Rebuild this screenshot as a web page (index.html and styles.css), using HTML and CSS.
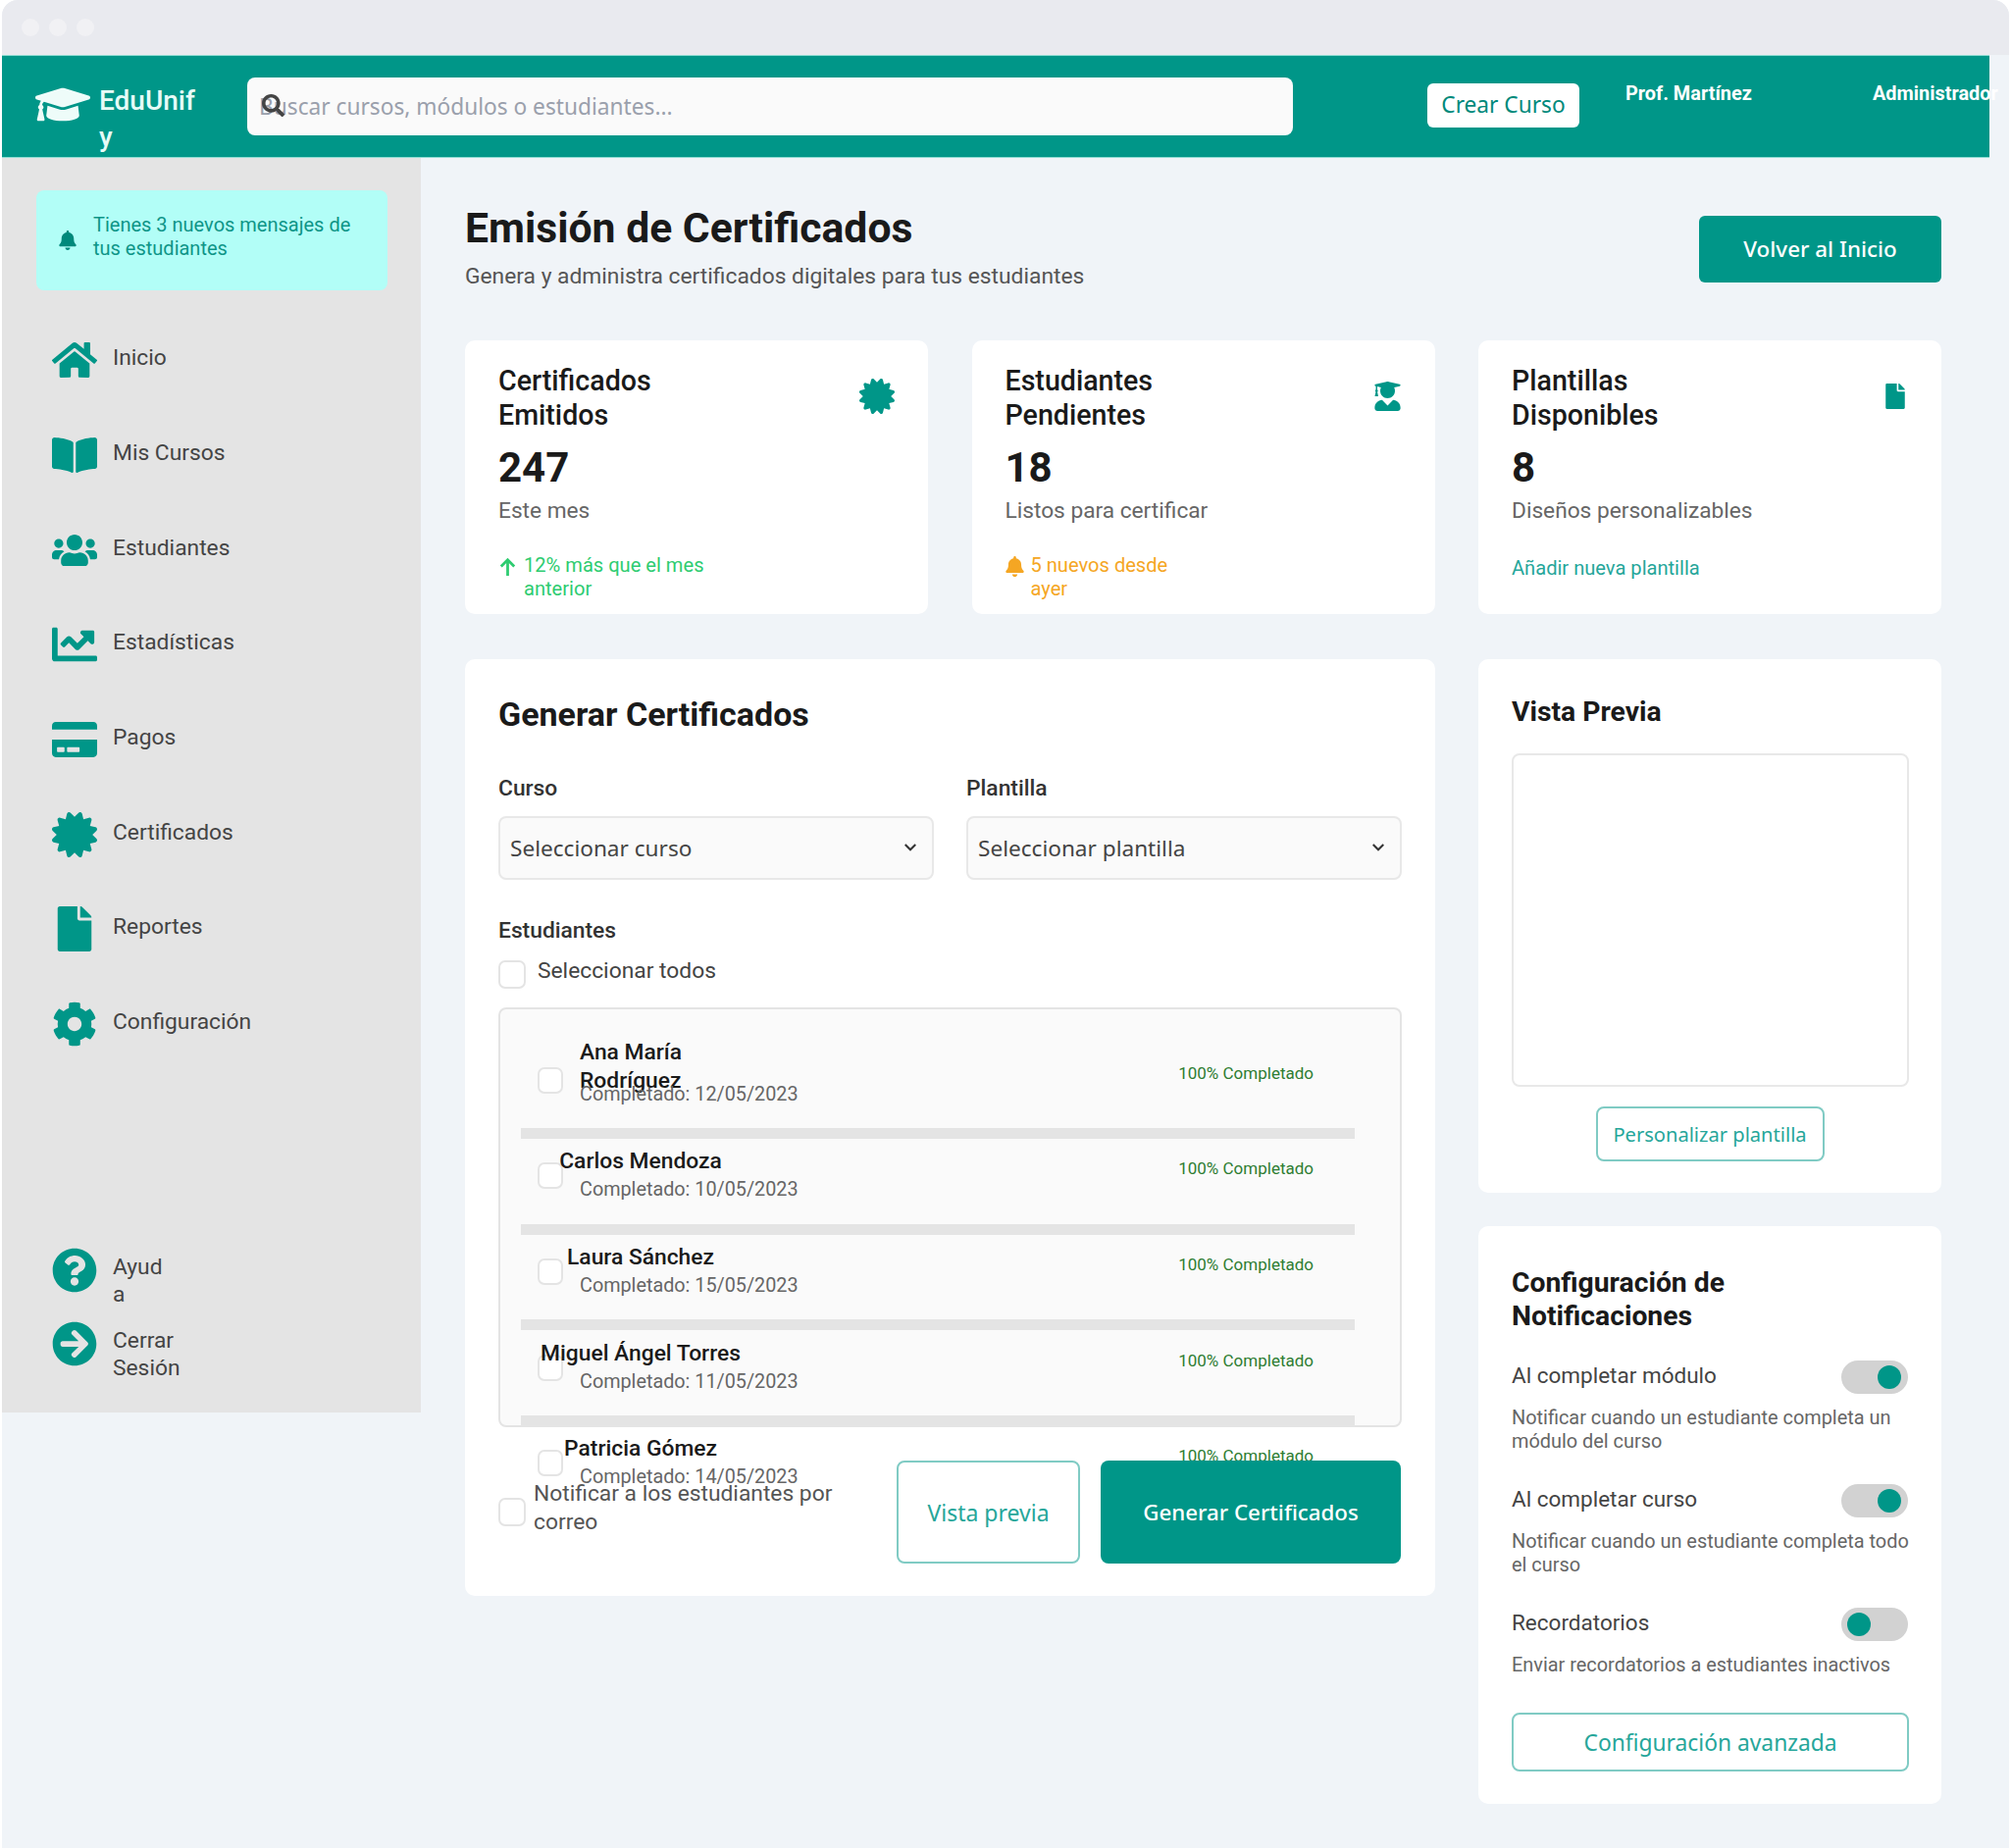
FILE: index.html
```html
<!DOCTYPE html>
<html lang="en">
<head>
<meta charset="UTF-8">
<meta name="viewport" content="width=device-width, initial-scale=1.0">
<title>EduUnify - Emisión de Certificados</title>
<link rel="stylesheet" href="styles.css">
</head>
<body>

<svg class="sprite" xmlns="http://www.w3.org/2000/svg">
  <symbol id="i-cap" viewBox="0 0 640 512"><path d="M622.34 153.2L343.4 67.5c-15.2-4.67-31.6-4.67-46.79 0L17.66 153.2c-23.54 7.23-23.54 38.36 0 45.59l48.63 14.94c-10.67 13.19-17.23 29.28-17.88 46.9C38.78 266.15 32 276.11 32 288c0 10.78 5.68 19.85 13.86 25.65L20.33 428.53C18.11 438.52 25.71 448 35.94 448h56.11c10.24 0 17.84-9.48 15.62-19.47L82.14 313.65C90.32 307.85 96 298.78 96 288c0-11.57-6.47-21.25-15.66-26.87.76-15.02 8.44-28.3 20.69-36.72L296.6 284.5c9.06 2.78 26.44 6.25 46.79 0l278.95-85.7c23.55-7.24 23.55-38.36 0-45.6zM352.79 315.09c-28.53 8.76-52.84 3.92-65.59 0l-145.02-44.55L128 384c0 35.35 85.96 64 192 64s192-28.65 192-64l-14.18-113.47-145.03 44.56z"/></symbol>
  <symbol id="i-search" viewBox="0 0 512 512"><path d="M505 442.7L405.3 343c-4.5-4.5-10.6-7-17-7H372c27.6-35.3 44-79.7 44-128C416 93.1 322.9 0 208 0S0 93.1 0 208s93.1 208 208 208c48.3 0 92.7-16.4 128-44v16.3c0 6.4 2.5 12.5 7 17l99.7 99.7c9.4 9.4 24.6 9.4 33.9 0l28.3-28.3c9.4-9.4 9.4-24.6.1-34zM208 336c-70.7 0-128-57.2-128-128 0-70.7 57.2-128 128-128 70.7 0 128 57.2 128 128 0 70.7-57.2 128-128 128z"/></symbol>
  <symbol id="i-bell" viewBox="0 0 448 512"><path d="M224 512c35.32 0 63.97-28.65 63.97-64H160.03c0 35.35 28.65 64 63.97 64zm215.39-149.71c-19.32-20.76-55.47-51.99-55.47-154.29 0-77.7-54.48-139.9-127.94-155.16V32c0-17.67-14.32-32-31.98-32s-31.98 14.33-31.98 32v20.84C118.56 68.1 64.08 130.3 64.08 208c0 102.3-36.15 133.53-55.47 154.29-6 6.45-8.66 14.16-8.61 21.71.11 16.4 12.98 32 32.1 32h383.8c19.12 0 32-15.6 32.1-32 .05-7.55-2.61-15.27-8.61-21.71z"/></symbol>
  <symbol id="i-home" viewBox="0 0 576 512"><path d="M280.37 148.26L96 300.11V464a16 16 0 0 0 16 16l112.06-.29a16 16 0 0 0 15.92-16V368a16 16 0 0 1 16-16h64a16 16 0 0 1 16 16v95.64a16 16 0 0 0 16 16.05L464 480a16 16 0 0 0 16-16V300L295.67 148.26a12.19 12.19 0 0 0-15.3 0zM571.6 251.47L488 182.56V44.05a12 12 0 0 0-12-12h-56a12 12 0 0 0-12 12v72.61L318.47 43a48 48 0 0 0-61 0L4.34 251.47a12 12 0 0 0-1.6 16.9l25.5 31A12 12 0 0 0 45.15 301l235.22-193.74a12.19 12.19 0 0 1 15.3 0L530.9 301a12 12 0 0 0 16.9-1.6l25.5-31a12 12 0 0 0-1.7-16.93z"/></symbol>
  <symbol id="i-book" viewBox="0 0 576 512"><path d="M542.22 32.05c-54.8 3.11-163.72 14.43-230.96 55.59-4.64 2.84-7.27 7.89-7.27 13.17v363.87c0 11.55 12.63 18.85 23.28 13.49 69.18-34.82 169.23-44.32 218.7-46.92 16.89-.89 30.02-14.43 30.02-30.66V62.75c.01-17.71-15.35-31.74-33.77-30.7zM264.73 87.64C197.5 46.48 88.58 35.17 33.78 32.05 15.36 31.01 0 45.04 0 62.75V400.6c0 16.24 13.13 29.78 30.02 30.66 49.49 2.6 149.59 12.11 218.77 46.95 10.62 5.35 23.21-1.94 23.21-13.46V100.63c0-5.29-2.62-10.14-7.27-12.99z"/></symbol>
  <symbol id="i-users" viewBox="0 0 640 512"><path d="M96 224c35.3 0 64-28.7 64-64s-28.7-64-64-64-64 28.7-64 64 28.7 64 64 64zm448 0c35.3 0 64-28.7 64-64s-28.7-64-64-64-64 28.7-64 64 28.7 64 64 64zm32 32h-64c-17.6 0-33.5 7.1-45.1 18.6 40.3 22.1 68.9 62 75.1 109.4h66c17.7 0 32-14.3 32-32v-32c0-35.3-28.7-64-64-64zm-256 0c61.9 0 112-50.1 112-112S381.9 32 320 32 208 82.1 208 144s50.1 112 112 112zm76.8 32h-8.3c-20.8 10-43.9 16-68.5 16s-47.6-6-68.5-16h-8.3C179.6 288 128 339.6 128 403.2V432c0 26.5 21.5 48 48 48h288c26.5 0 48-21.5 48-48v-28.8c0-63.6-51.6-115.2-115.2-115.2zm-223.7-13.4C161.5 263.1 145.6 256 128 256H64c-35.3 0-64 28.7-64 64v32c0 17.7 14.3 32 32 32h65.9c6.3-47.4 34.9-87.3 75.2-109.4z"/></symbol>
  <symbol id="i-chart" viewBox="0 0 512 512"><path d="M496 384H64V80c0-8.84-7.16-16-16-16H16C7.16 64 0 71.16 0 80v336c0 17.67 14.33 32 32 32h464c8.84 0 16-7.16 16-16v-32c0-8.84-7.16-16-16-16zM464 96H345.94c-21.38 0-32.09 25.85-16.97 40.97l32.4 32.4L288 242.75l-73.37-73.37c-12.5-12.5-32.76-12.5-45.25 0l-68.69 68.69c-6.25 6.25-6.25 16.38 0 22.63l22.62 22.62c6.25 6.25 16.38 6.25 22.63 0L192 237.25l73.37 73.37c12.5 12.5 32.76 12.5 45.25 0l96-96 32.4 32.4c15.12 15.12 40.97 4.41 40.97-16.97V112c.01-8.84-7.15-16-15.99-16z"/></symbol>
  <symbol id="i-card" viewBox="0 0 576 512"><path d="M0 432c0 26.5 21.5 48 48 48h480c26.5 0 48-21.5 48-48V256H0v176zm192-68c0-6.6 5.4-12 12-12h136c6.6 0 12 5.4 12 12v40c0 6.6-5.4 12-12 12H204c-6.6 0-12-5.4-12-12v-40zm-128 0c0-6.6 5.4-12 12-12h72c6.6 0 12 5.4 12 12v40c0 6.6-5.4 12-12 12H76c-6.6 0-12-5.4-12-12v-40zM576 80v48H0V80c0-26.5 21.5-48 48-48h480c26.5 0 48 21.5 48 48z"/></symbol>
  <symbol id="i-cert" viewBox="0 0 512 512"><path d="M458.622 255.92l45.985-45.005c13.708-12.977 7.316-36.039-10.664-40.339l-62.65-15.99 17.661-62.015c4.991-17.838-11.829-34.663-29.661-29.671l-61.994 17.667-15.984-62.671C337.085.197 313.765-6.276 300.99 7.228L256 53.57 211.011 7.229c-12.63-13.351-36.047-7.234-40.325 10.668l-15.984 62.671-61.995-17.667C74.87 57.907 58.056 74.738 63.046 92.572l17.661 62.015-62.65 15.99C.069 174.878-6.31 197.944 7.392 210.915l45.985 45.005-45.985 45.004c-13.708 12.977-7.316 36.039 10.664 40.339l62.65 15.99-17.661 62.015c-4.991 17.838 11.829 34.663 29.661 29.671l61.994-17.667 15.984 62.671c4.439 18.575 27.696 24.018 40.325 10.668L256 458.61l44.989 46.001c12.5 13.488 35.987 7.486 40.325-10.668l15.984-62.671 61.994 17.667c17.836 4.994 34.651-11.837 29.661-29.671l-17.661-62.015 62.65-15.99c17.987-4.302 24.366-27.367 10.664-40.339l-45.984-45.004z"/></symbol>
  <symbol id="i-file" viewBox="0 0 384 512"><path d="M224 136V0H24C10.7 0 0 10.7 0 24v464c0 13.3 10.7 24 24 24h336c13.3 0 24-10.7 24-24V160H248c-13.2 0-24-10.8-24-24zm160-14.1v6.1H256V0h6.1c6.4 0 12.5 2.5 17 7l97.9 98c4.5 4.5 7 10.6 7 16.9z"/></symbol>
  <symbol id="i-cog" viewBox="0 0 512 512"><path d="M487.4 315.7l-42.6-24.6c4.3-23.2 4.3-47 0-70.2l42.6-24.6c4.9-2.8 7.1-8.6 5.5-14-11.1-35.6-30-67.8-54.7-94.6-3.8-4.1-10-5.1-14.8-2.3L380.8 110c-17.9-15.4-38.5-27.3-60.8-35.1V25.8c0-5.6-3.9-10.5-9.4-11.7-36.7-8.2-74.3-7.8-109.2 0-5.5 1.2-9.4 6.1-9.4 11.7V75c-22.2 7.9-42.8 19.8-60.8 35.1L88.7 85.5c-4.9-2.8-11-1.9-14.8 2.3-24.7 26.7-43.6 58.9-54.7 94.6-1.7 5.4.6 11.2 5.5 14L67.3 221c-4.3 23.2-4.3 47 0 70.2l-42.6 24.6c-4.9 2.8-7.1 8.6-5.5 14 11.1 35.6 30 67.8 54.7 94.6 3.8 4.1 10 5.1 14.8 2.3l42.6-24.6c17.9 15.4 38.5 27.3 60.8 35.1v49.2c0 5.6 3.9 10.5 9.4 11.7 36.7 8.2 74.3 7.8 109.2 0 5.5-1.2 9.4-6.1 9.4-11.7v-49.2c22.2-7.9 42.8-19.8 60.8-35.1l42.6 24.6c4.9 2.8 11 1.9 14.8-2.3 24.7-26.7 43.6-58.9 54.7-94.6 1.5-5.5-.7-11.3-5.6-14.1zM256 336c-44.1 0-80-35.9-80-80s35.9-80 80-80 80 35.9 80 80-35.9 80-80 80z"/></symbol>
  <symbol id="i-help" viewBox="0 0 512 512"><path d="M504 256c0 136.997-111.043 248-248 248S8 392.997 8 256C8 119.083 119.043 8 256 8s248 111.083 248 248zM262.655 90c-54.497 0-89.255 22.957-116.549 63.758-3.536 5.286-2.353 12.415 2.715 16.258l34.699 26.31c5.205 3.947 12.621 3.008 16.665-2.122 17.864-22.658 30.113-35.797 57.303-35.797 20.429 0 45.698 13.148 45.698 32.958 0 14.976-12.363 22.667-32.534 33.976C247.128 238.528 216 254.941 216 296v4c0 6.627 5.373 12 12 12h56c6.627 0 12-5.373 12-12v-1.333c0-28.462 83.186-29.647 83.186-106.667 0-58.002-60.165-102-116.531-102zM256 338c-25.365 0-46 20.635-46 46 0 25.364 20.635 46 46 46s46-20.636 46-46c0-25.365-20.635-46-46-46z"/></symbol>
  <symbol id="i-logout" viewBox="0 0 512 512"><path d="M256 8c137 0 248 111 248 248S393 504 256 504 8 393 8 256 119 8 256 8zm-28.9 143.6l75.5 72.4H120c-13.3 0-24 10.7-24 24v16c0 13.3 10.7 24 24 24h182.6l-75.5 72.4c-9.7 9.3-9.9 24.8-.4 34.3l11 10.9c9.4 9.4 24.6 9.4 33.9 0l132.7-132.6c9.4-9.4 9.4-24.6 0-33.9L271.6 106.3c-9.4-9.4-24.6-9.4-33.9 0l-11 10.9c-9.3 9.6-9.1 25.1.4 34.4z"/></symbol>
  <symbol id="i-grad" viewBox="0 0 448 512"><path d="M319.4 320.6L224 416l-95.4-95.4C57.1 323.7 0 382.2 0 454.4v9.6c0 26.5 21.5 48 48 48h352c26.5 0 48-21.5 48-48v-9.6c0-72.2-57.1-130.7-128.6-133.8zM13.6 79.8l6.4 1.5v58.4c-7 4.2-12 11.5-12 20.3 0 8.4 4.6 15.4 11.1 19.7L3.5 242c-1.7 6.9 2.1 14 7.6 14h41.8c5.5 0 9.3-7.1 7.6-14l-15.6-62.3C51.4 175.4 56 168.4 56 160c0-8.8-5-16.1-12-20.3V87.1l66 15.9c-8.6 17.2-14 36.4-14 57 0 70.7 57.3 128 128 128s128-57.3 128-128c0-20.6-5.3-39.8-14-57l96.3-23.2c18.2-4.4 18.2-27.1 0-31.5l-190.4-46c-13-3.1-26.7-3.1-39.7 0L13.6 48.2c-18.1 4.4-18.1 27.2 0 31.6z"/></symbol>
  <symbol id="i-up" viewBox="0 0 24 24"><path d="M12 24V4M3.500 12l8.500-8.500 8.500 8.500" fill="none" stroke="currentColor" stroke-width="3.500"/></symbol>
  <symbol id="i-chevron" viewBox="0 0 12 8"><path d="M1.500 1.500L6 6l4.500-4.500" fill="none" stroke="currentColor" stroke-width="1.800"/></symbol>
</svg>

<div class="window">
  <div class="window-bar">
    <span class="dot"></span><span class="dot"></span><span class="dot"></span>
  </div>

  <header class="topbar">
    <div class="brand">
      <svg class="brand-icon"><use href="#i-cap"/></svg>
      <span class="brand-name">EduUnify</span>
    </div>
    <div class="search">
      <svg class="search-icon"><use href="#i-search"/></svg>
      <input class="search-input" type="text" placeholder="Buscar cursos, módulos o estudiantes...">
    </div>
    <button class="btn-create">Crear Curso</button>
    <span class="user-name">Prof. Martínez</span>
    <span class="user-role">Administrador</span>
  </header>

  <div class="layout">
    <aside class="sidebar">
      <div class="notice">
        <svg class="notice-icon"><use href="#i-bell"/></svg>
        <span class="notice-text">Tienes 3 nuevos mensajes de tus estudiantes</span>
      </div>

      <nav class="nav">
        <a class="nav-item"><svg class="nav-icon"><use href="#i-home"/></svg><span>Inicio</span></a>
        <a class="nav-item"><svg class="nav-icon"><use href="#i-book"/></svg><span>Mis Cursos</span></a>
        <a class="nav-item"><svg class="nav-icon"><use href="#i-users"/></svg><span>Estudiantes</span></a>
        <a class="nav-item"><svg class="nav-icon"><use href="#i-chart"/></svg><span>Estadísticas</span></a>
        <a class="nav-item"><svg class="nav-icon"><use href="#i-card"/></svg><span>Pagos</span></a>
        <a class="nav-item"><svg class="nav-icon"><use href="#i-cert"/></svg><span>Certificados</span></a>
        <a class="nav-item"><svg class="nav-icon"><use href="#i-file"/></svg><span>Reportes</span></a>
        <a class="nav-item"><svg class="nav-icon"><use href="#i-cog"/></svg><span>Configuración</span></a>
      </nav>

      <div class="nav-bottom">
        <a class="nav-foot"><svg class="nav-icon"><use href="#i-help"/></svg><span class="nav-foot-help">Ayuda</span></a>
        <a class="nav-foot"><svg class="nav-icon"><use href="#i-logout"/></svg><span class="nav-foot-out">Cerrar Sesión</span></a>
      </div>
    </aside>

    <main class="main">
      <div class="page-head">
        <div>
          <h1 class="page-title">Emisión de Certificados</h1>
          <p class="page-sub">Genera y administra certificados digitales para tus estudiantes</p>
        </div>
        <button class="btn-primary btn-back">Volver al Inicio</button>
      </div>

      <section class="stats">
        <div class="card stat">
          <div class="stat-top">
            <h3 class="stat-title">Certificados Emitidos</h3>
            <svg class="stat-icon icon-cert"><use href="#i-cert"/></svg>
          </div>
          <div class="stat-value">247</div>
          <div class="stat-label">Este mes</div>
          <div class="stat-foot up">
            <svg class="foot-icon"><use href="#i-up"/></svg>
            <span>12% más que el mes anterior</span>
          </div>
        </div>
        <div class="card stat">
          <div class="stat-top">
            <h3 class="stat-title">Estudiantes Pendientes</h3>
            <svg class="stat-icon icon-grad"><use href="#i-grad"/></svg>
          </div>
          <div class="stat-value">18</div>
          <div class="stat-label">Listos para certificar</div>
          <div class="stat-foot warn">
            <svg class="foot-icon"><use href="#i-bell"/></svg>
            <span>5 nuevos desde ayer</span>
          </div>
        </div>
        <div class="card stat">
          <div class="stat-top">
            <h3 class="stat-title">Plantillas Disponibles</h3>
            <svg class="stat-icon icon-file"><use href="#i-file"/></svg>
          </div>
          <div class="stat-value">8</div>
          <div class="stat-label">Diseños personalizables</div>
          <div class="stat-foot link">Añadir nueva plantilla</div>
        </div>
      </section>

      <section class="columns">
        <div class="card generate">
          <h2 class="generate-title">Generar Certificados</h2>

          <div class="form-row">
            <div class="form-group">
              <label class="form-label" for="curso">Curso</label>
              <div class="select-wrap">
                <select class="form-select" id="curso"><option>Seleccionar curso</option></select>
                <svg class="select-arrow"><use href="#i-chevron"/></svg>
              </div>
            </div>
            <div class="form-group">
              <label class="form-label" for="plantilla">Plantilla</label>
              <div class="select-wrap">
                <select class="form-select" id="plantilla"><option>Seleccionar plantilla</option></select>
                <svg class="select-arrow"><use href="#i-chevron"/></svg>
              </div>
            </div>
          </div>

          <div class="form-label label-students">Estudiantes</div>
          <label class="check-all"><input class="check" type="checkbox"><span>Seleccionar todos</span></label>

          <div class="student-list">
            <div class="student student-tall">
              <input class="check student-check" type="checkbox">
              <div class="student-info">
                <div class="student-name name-wrap">Ana María Rodríguez</div>
                <div class="student-date">Completado: 12/05/2023</div>
              </div>
              <div class="student-status">100% Completado</div>
            </div>
            <div class="student">
              <input class="check student-check" type="checkbox">
              <div class="student-info">
                <div class="student-name">Carlos Mendoza</div>
                <div class="student-date">Completado: 10/05/2023</div>
              </div>
              <div class="student-status">100% Completado</div>
            </div>
            <div class="student">
              <input class="check student-check" type="checkbox">
              <div class="student-info">
                <div class="student-name">Laura Sánchez</div>
                <div class="student-date">Completado: 15/05/2023</div>
              </div>
              <div class="student-status">100% Completado</div>
            </div>
            <div class="student">
              <input class="check student-check" type="checkbox">
              <div class="student-info">
                <div class="student-name">Miguel Ángel Torres</div>
                <div class="student-date">Completado: 11/05/2023</div>
              </div>
              <div class="student-status">100% Completado</div>
            </div>
            <div class="student">
              <input class="check student-check" type="checkbox">
              <div class="student-info">
                <div class="student-name">Patricia Gómez</div>
                <div class="student-date">Completado: 14/05/2023</div>
              </div>
              <div class="student-status">100% Completado</div>
            </div>
          </div>

          <div class="generate-actions">
            <label class="check-notify"><input class="check" type="checkbox"><span>Notificar a los estudiantes por correo</span></label>
            <button class="btn-outline btn-preview">Vista previa</button>
            <button class="btn-primary btn-generate">Generar Certificados</button>
          </div>
        </div>

        <div class="side-col">
          <div class="card preview">
            <h3 class="side-title">Vista Previa</h3>
            <div class="preview-box"></div>
            <button class="btn-outline btn-custom">Personalizar plantilla</button>
          </div>

          <div class="card settings">
            <h3 class="side-title">Configuración de Notificaciones</h3>

            <div class="setting">
              <div class="setting-head">
                <span class="setting-name">Al completar módulo</span>
                <span class="toggle on"></span>
              </div>
              <p class="setting-desc">Notificar cuando un estudiante completa un módulo del curso</p>
            </div>
            <div class="setting">
              <div class="setting-head">
                <span class="setting-name">Al completar curso</span>
                <span class="toggle on"></span>
              </div>
              <p class="setting-desc">Notificar cuando un estudiante completa todo el curso</p>
            </div>
            <div class="setting">
              <div class="setting-head">
                <span class="setting-name">Recordatorios</span>
                <span class="toggle"></span>
              </div>
              <p class="setting-desc">Enviar recordatorios a estudiantes inactivos</p>
            </div>

            <button class="btn-outline btn-advanced">Configuración avanzada</button>
          </div>
        </div>
      </section>
    </main>
  </div>
</div>

</body>
</html>
```

FILE: styles.css
```css
* {
  box-sizing: border-box;
}

body {
  margin: 0;
  background-color: #fff;
  font-family: Roboto, sans-serif;
  font-size: 22.8px;
  color: #444;
}

.sprite {
  display: none;
}

button, select, input {
  font-family: "Noto Sans", sans-serif;
}

h1, h2, h3, p {
  margin: 0;
}

/* Window frame */
.window {
  margin: 0 2px;
  height: 1884px;
  background-color: #f0f4f8;
  border-radius: 16px 16px 0 0;
  overflow: hidden;
}

.window-bar {
  height: 56px;
  background-color: #e9eaef;
  display: flex;
  align-items: center;
  gap: 10px;
  padding-left: 20px;
}

.dot {
  width: 18px;
  height: 18px;
  border-radius: 50%;
  background-color: #f1f1f4;
}

/* Top bar */
.topbar {
  position: relative;
  width: 2026px;
  height: 105px;
  background-color: #009688;
  box-shadow: inset 0 1px 0 #8fdcd3, inset 0 -1px 0 #8fdcd3;
  display: flex;
  align-items: flex-start;
  padding-left: 34px;
  color: #fff;
}

.topbar > * {
  flex-shrink: 0;
}

.brand {
  width: 216px;
  display: flex;
  padding-top: 28px;
}

.brand-icon {
  width: 56px;
  height: 45px;
  fill: #eefcf9;
  flex-shrink: 0;
}

.brand-name {
  width: 104px;
  margin-left: 9px;
  font-size: 28px;
  font-weight: 500;
  line-height: 37px;
  word-break: break-all;
  color: #e6fbf7;
}

.search {
  position: relative;
  width: 1066px;
  margin-top: 23px;
}

.search-input {
  width: 100%;
  height: 59px;
  border: none;
  border-radius: 8px;
  background-color: #fafafa;
  padding: 0 12px;
  font-size: 22.7px;
}

.search-input::placeholder {
  color: #9aa0ac;
}

.search-icon {
  position: absolute;
  left: 15px;
  top: 17px;
  width: 23px;
  height: 23px;
  fill: #444;
}

.btn-create {
  margin: 29px 0 0 137px;
  width: 155px;
  height: 45px;
  border: none;
  border-radius: 6px;
  background-color: #fff;
  color: #00897b;
  font-size: 22.7px;
  padding: 0 0 2px;
}

.user-name,
.user-role {
  margin-top: 28px;
  font-size: 19.9px;
  font-weight: 700;
  line-height: 24px;
  white-space: nowrap;
}

.user-name {
  margin-left: 47px;
  width: 252px;
}

/* Layout */
.layout {
  display: flex;
  align-items: flex-start;
}

.sidebar {
  width: 427px;
  height: 1279px;
  background-color: #e4e4e4;
  padding: 33px 34px 0 35px;
  display: flex;
  flex-direction: column;
  flex-shrink: 0;
}

.notice {
  height: 102px;
  background-color: #b2fef7;
  border-radius: 8px;
  display: flex;
  align-items: center;
  gap: 17px;
  padding: 0 24px 0 23px;
  font-size: 20px;
  line-height: 24px;
  color: #0e9587;
}

.notice-text {
  margin-bottom: 8px;
}

.notice-icon {
  width: 18px;
  height: 20px;
  fill: #00897b;
  flex-shrink: 0;
}

.nav {
  margin-top: 23px;
  display: flex;
  flex-direction: column;
}

.nav-item {
  height: 96.7px;
  display: flex;
  align-items: center;
  gap: 16px;
  padding-left: 16px;
  line-height: 27px;
}

.nav-item span {
  margin-bottom: 5px;
}

.nav-icon {
  width: 46px;
  height: 46px;
  fill: #009688;
  flex-shrink: 0;
}

.nav-bottom {
  position: relative;
  margin-top: 179px;
}

.nav-foot {
  display: flex;
  gap: 16px;
  padding-left: 16px;
  line-height: 28px;
  margin-bottom: 13px;
}

.nav-foot span {
  margin-top: 6px;
}

.nav-foot-help {
  width: 54px;
  word-break: break-all;
}

.nav-foot-out {
  width: 90px;
}

/* Main */
.main {
  flex: 1;
  padding: 46px 69px 0 45px;
}

.page-head {
  display: flex;
  justify-content: space-between;
  align-items: center;
}

.page-title {
  font-size: 42.7px;
  font-weight: 700;
  line-height: 50px;
  color: #1a1a1a;
}

.page-sub {
  margin-top: 11px;
  font-size: 22.8px;
  line-height: 27px;
  color: #555;
}

.btn-primary {
  border: none;
  border-radius: 6px;
  background-color: #009688;
  color: #fff;
  font-weight: 500;
}

.btn-outline {
  background-color: #fff;
  border: 2px solid #80cbc4;
  border-radius: 8px;
  color: #26a69a;
}

.btn-back {
  width: 247px;
  height: 68px;
  margin-top: 5px;
  font-size: 22.4px;
}

.card {
  background-color: #fff;
  border-radius: 10px;
}

/* Stats */
.stats {
  margin-top: 52px;
  display: grid;
  grid-template-columns: repeat(3, 472px);
  gap: 44.5px;
}

.stat {
  height: 279px;
  padding: 24px 34px 0;
}

.stat-top {
  display: flex;
  justify-content: space-between;
  align-items: flex-start;
}

.stat-title {
  width: 200px;
  font-size: 28.6px;
  font-weight: 500;
  line-height: 35px;
  color: #1a1a1a;
}

.stat-icon {
  fill: #009688;
}

.icon-cert {
  width: 36px;
  height: 36px;
  margin-top: 15px;
}

.icon-grad {
  width: 27px;
  height: 30px;
  margin: 18px 1px 0 0;
}

.icon-file {
  width: 20px;
  height: 26px;
  margin: 20px 3px 0 0;
}

.stat-value {
  margin-top: 11px;
  font-size: 42px;
  font-weight: 700;
  line-height: 50px;
  color: #1a1a1a;
}

.stat-label {
  margin-top: 5px;
  font-size: 22.7px;
  line-height: 28px;
  color: #666;
}

.stat-foot {
  margin-top: 29px;
  display: flex;
  gap: 7px;
  font-size: 20.1px;
  line-height: 24px;
}

.stat-foot span {
  width: 210px;
}

.stat-foot.warn span {
  width: 160px;
}

.foot-icon {
  width: 19px;
  height: 21px;
  margin-top: 3px;
  fill: currentColor;
  flex-shrink: 0;
}

.up {
  color: #2ecc71;
}

.warn {
  color: #f5a623;
}

.link {
  margin-top: 32px;
  color: #26a69a;
}

/* Generate card */
.columns {
  margin-top: 46px;
  display: grid;
  grid-template-columns: 989px 472px;
  gap: 44px;
  align-items: start;
}

.generate {
  height: 955px;
  padding: 35px 34px 34px;
}

.generate-title {
  font-size: 34px;
  font-weight: 700;
  line-height: 42px;
  color: #1a1a1a;
}

.form-row {
  margin-top: 41px;
  display: grid;
  grid-template-columns: 444px 444px;
  gap: 33px;
}

.form-label {
  display: block;
  font-size: 22.8px;
  font-weight: 500;
  line-height: 28px;
  color: #333;
}

.select-wrap {
  position: relative;
  margin-top: 14px;
}

.form-select {
  appearance: none;
  display: block;
  width: 100%;
  height: 65px;
  border: 2px solid #e8e8e8;
  border-radius: 8px;
  background-color: #fafafa;
  padding: 0 10px;
  font-size: 22.6px;
  color: #444;
}

.select-arrow {
  position: absolute;
  top: 27px;
  right: 17px;
  width: 14px;
  height: 10px;
  color: #333;
}

.label-students {
  margin-top: 38px;
}

.check {
  appearance: none;
  margin: 0;
  width: 28px;
  height: 29px;
  border: 2px solid #e4e4e4;
  border-radius: 7px;
  background-color: #fff;
  flex-shrink: 0;
}

.check-all {
  margin-top: 16px;
  display: flex;
  align-items: flex-start;
  gap: 12px;
  line-height: 27px;
}

.check-all span {
  margin-top: -3px;
}

/* Student list: fixed height, rows run out of the bottom of it */
.student-list {
  margin-top: 19px;
  height: 428px;
  border: 2px solid #e4e4e4;
  border-radius: 8px;
  background-color: #fafafa;
  padding: 20px 46px 0 21px;
}

.student {
  height: 97.7px;
  border-bottom: 11px solid #e4e4e4;
  padding: 9px 42px 0 17px;
  display: flex;
  align-items: center;
}

.student:last-child {
  border-bottom: none;
  padding-bottom: 11px;
}

.student-tall {
  height: 112px;
}

.student-check {
  width: 26px;
  height: 27px;
  margin-right: 17px;
  margin-bottom: 20px;
}

.student-tall .student-check {
  margin-bottom: 5px;
}

.student-info {
  flex: 1;
  margin-bottom: 22px;
}

.student-name {
  width: 124px;
  display: flex;
  justify-content: center;
  white-space: nowrap;
  font-size: 22.8px;
  font-weight: 500;
  line-height: 27px;
  color: #1a1a1a;
}

.name-wrap {
  display: block;
  white-space: normal;
  line-height: 29px;
  margin-bottom: -16px;
}

.student-date {
  margin-top: 4px;
  font-size: 19.8px;
  line-height: 24px;
  color: #666;
}

.student-status {
  margin-bottom: 35px;
  font-size: 17px;
  line-height: 22px;
  color: #2e7d32;
}

.student-tall .student-status {
  margin-bottom: 20px;
}

.generate-actions {
  position: relative;
  margin-top: 34px;
  display: flex;
  align-items: center;
}

.check-notify {
  width: 390px;
  display: flex;
  align-items: center;
  gap: 8px;
  font-size: 22.8px;
  line-height: 29px;
  color: #555;
}

.check-notify span {
  margin-bottom: 10px;
}

.btn-preview {
  margin-left: 16px;
  width: 187px;
  height: 105px;
  font-size: 23px;
}

.btn-generate {
  margin-left: 21px;
  width: 306px;
  height: 105px;
  border-radius: 8px;
  font-size: 22.3px;
}

/* Right column */
.side-col {
  display: flex;
  flex-direction: column;
  gap: 34px;
}

.side-title {
  font-size: 28.3px;
  font-weight: 700;
  line-height: 34px;
  color: #1a1a1a;
}

.preview {
  height: 544px;
  padding: 37px 34px 0;
  display: flex;
  flex-direction: column;
  align-items: center;
}

.preview .side-title {
  align-self: flex-start;
}

.preview-box {
  width: 405px;
  height: 340px;
  margin-top: 25px;
  border: 2px solid #e8e8e8;
  border-radius: 8px;
}

.btn-custom {
  margin-top: 20px;
  width: 233px;
  height: 56px;
  font-size: 20.1px;
  padding: 0;
}

.settings {
  height: 589px;
  padding: 41px 34px 0;
}

.settings .side-title {
  width: 300px;
}

.setting {
  margin-top: 29px;
}

.settings .side-title + .setting {
  margin-top: 26px;
}

.setting-head {
  display: flex;
  justify-content: space-between;
  align-items: center;
  height: 38px;
}

.setting-name {
  margin-bottom: 5px;
  font-size: 22.5px;
  line-height: 28px;
}

.toggle {
  position: relative;
  width: 68px;
  height: 34px;
  border-radius: 17px;
  background-color: #d2d2d2;
}

.toggle::after {
  content: "";
  position: absolute;
  top: 5px;
  left: 6px;
  width: 24px;
  height: 24px;
  border-radius: 50%;
  background-color: #009688;
}

.toggle.on::after {
  left: auto;
  right: 7px;
}

.setting-desc {
  margin: 11px -8px 0 0;
  font-size: 19.9px;
  line-height: 24px;
  color: #666;
}

.btn-advanced {
  margin-top: 36px;
  width: 405px;
  height: 60px;
  font-size: 22.8px;
}
```
